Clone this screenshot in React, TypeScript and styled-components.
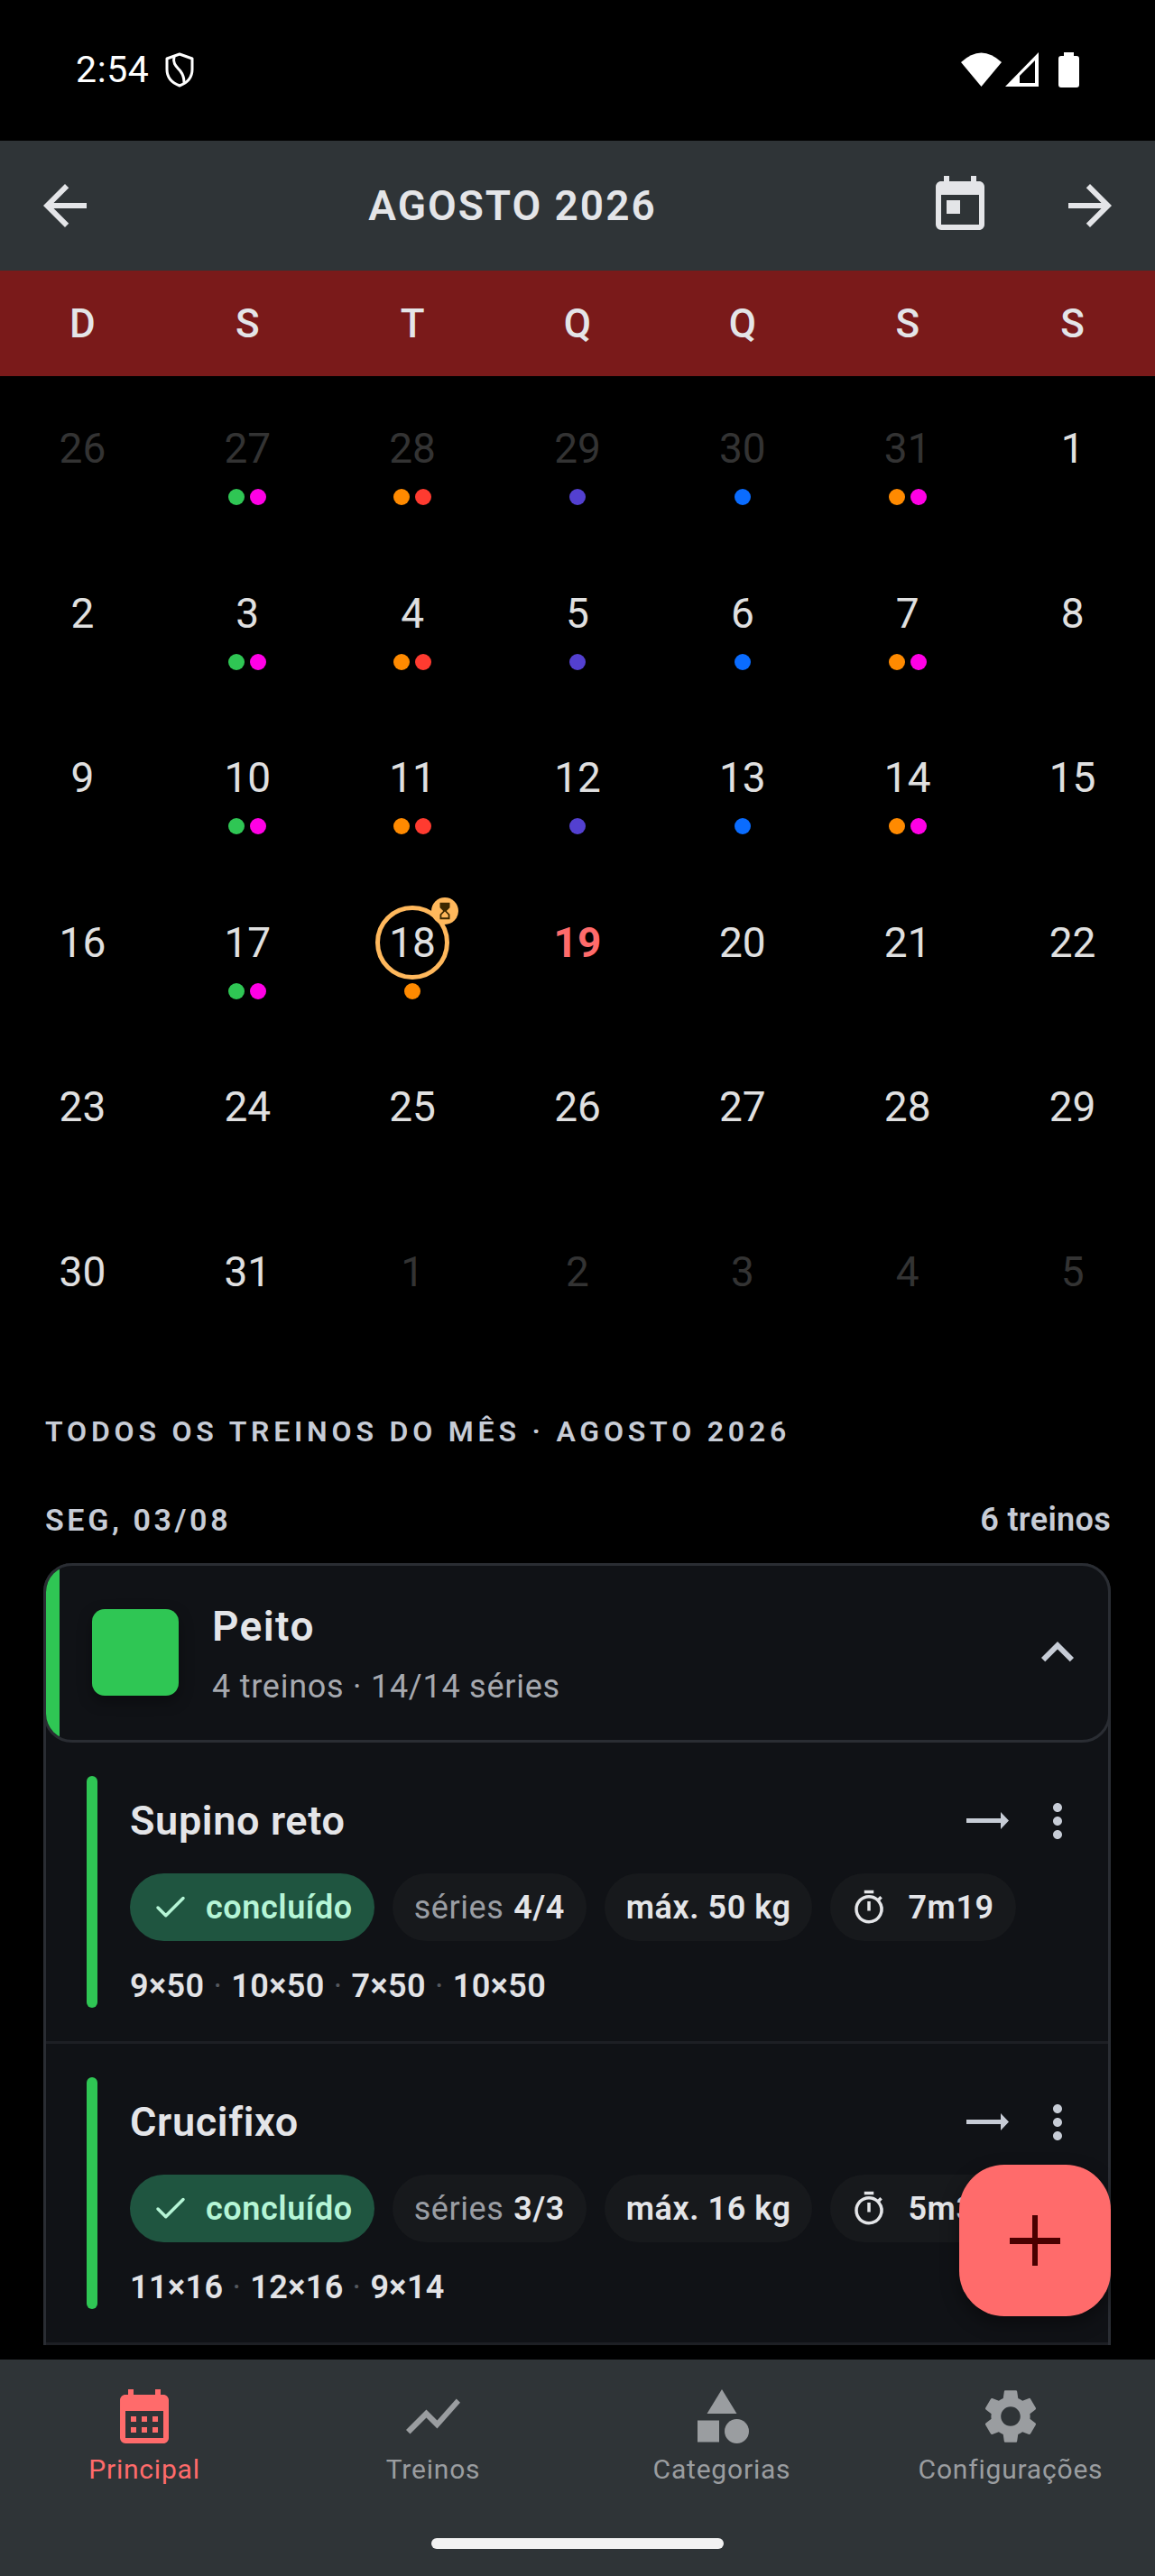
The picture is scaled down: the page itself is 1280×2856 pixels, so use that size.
import styled, { createGlobalStyle } from "styled-components";
import { Check } from "lucide-react";
import {
  MdArrowBack,
  MdArrowForward,
  MdCalendarMonth,
  MdCategory,
  MdExpandLess,
  MdHourglassTop,
  MdMoreVert,
  MdOutlineTimer,
  MdSettings,
  MdShowChart,
  MdToday,
} from "react-icons/md";

const GlobalStyle = createGlobalStyle`
  * { box-sizing: border-box; }
  html, body { margin: 0; padding: 0; background: #000; }
  body { font-family: Roboto, "Noto Sans", sans-serif; }
`;

const Page = styled.div`
  position: relative;
  width: 1280px;
  height: 2856px;
  display: flex;
  flex-direction: column;
  overflow: hidden;
  background: #000;
`;

const StatusBar = styled.div`
  height: 156px;
  flex: none;
  display: flex;
  justify-content: space-between;
  padding: 58px 84px 0;
  color: #fff;
`;

const StatusLeft = styled.div`
  display: flex;
  align-items: flex-start;
  gap: 18px;
`;

const StatusTime = styled.span`
  font-size: 41px;
  line-height: 39px;
  letter-spacing: 0.6px;
`;

const StatusRight = styled.div`
  display: flex;
  align-items: flex-start;
  gap: 4px;
`;

const Battery = styled.svg`
  margin-left: 18px;
`;

const Header = styled.header`
  height: 144px;
  flex: none;
  display: flex;
  align-items: center;
  padding: 0 36px;
  background: #2f3437;
  color: #e4e5e8;
`;

const HeaderTitle = styled.h1`
  flex: 1;
  margin: 0;
  text-align: center;
  font-size: 46px;
  font-weight: 600;
  letter-spacing: 2px;
`;

const HeaderIcons = styled.div`
  display: flex;
  align-items: center;
  gap: 72px;
`;

const Weekdays = styled.div`
  height: 117px;
  flex: none;
  display: grid;
  grid-template-columns: repeat(7, 1fr);
  align-items: center;
  background: #7a1a1a;
`;

const Weekday = styled.span`
  text-align: center;
  color: #e4e5e8;
  font-size: 44px;
  font-weight: 500;
`;

const Content = styled.main`
  flex: 1;
  min-height: 0;
  overflow: hidden;
`;

const Calendar = styled.div`
  display: grid;
  grid-template-columns: repeat(7, 1fr);
  grid-auto-rows: 182.6px;
`;

const DayCell = styled.div`
  display: flex;
  flex-direction: column;
  align-items: center;
  padding-top: 39px;
`;

const DayNumber = styled.div<{ $muted?: boolean; $today?: boolean; $ring?: boolean }>`
  position: relative;
  width: 82px;
  height: 82px;
  display: flex;
  align-items: center;
  justify-content: center;
  border-radius: 50%;
  border: 5px solid ${(p) => (p.$ring ? "#ffb85c" : "transparent")};
  font-size: 46px;
  font-weight: ${(p) => (p.$today ? 700 : 400)};
  color: ${(p) => (p.$today ? "#ff6b6b" : p.$muted ? "#333333" : "#e0e0e0")};
`;

const RingBadge = styled.span`
  position: absolute;
  top: -14px;
  right: -15px;
  width: 30px;
  height: 30px;
  display: flex;
  align-items: center;
  justify-content: center;
  border-radius: 50%;
  background: #ffb85c;
  color: #3d2800;
`;

const Dots = styled.div`
  display: flex;
  gap: 6px;
  margin-top: 4px;
`;

const Dot = styled.span<{ $color: string }>`
  width: 18px;
  height: 18px;
  border-radius: 50%;
  background: ${(p) => p.$color};
`;

const Section = styled.section`
  padding: 54px 49px 0 48px;
`;

const SectionTitle = styled.h2`
  margin: 0 0 0 2px;
  font-size: 32px;
  line-height: 40px;
  font-weight: 600;
  letter-spacing: 4.8px;
  color: #c7ccd6;
`;

const DayHeading = styled.div`
  display: flex;
  justify-content: space-between;
  margin: 58px 0 28px 2px;
  line-height: 40px;
  color: #c7ccd6;
`;

const DayLabel = styled.span`
  font-size: 34px;
  font-weight: 600;
  letter-spacing: 3.6px;
`;

const DayCount = styled.span`
  font-size: 36px;
  font-weight: 600;
  letter-spacing: 0.3px;
`;

const Group = styled.div`
  border: solid #2a2d33;
  border-width: 0 3px;
  background: #101216;
  border-radius: 32px 32px 0 0;
`;

const GroupHeader = styled.div`
  height: 199px;
  margin: 0 -3px;
  display: flex;
  align-items: center;
  border: 3px solid #2a2d33;
  border-radius: 32px;
  overflow: hidden;
  background: #101216;
`;

const GroupStripe = styled.span<{ $color: string }>`
  width: 15px;
  align-self: stretch;
  flex: none;
  background: ${(p) => p.$color};
`;

const GroupSwatch = styled.span<{ $color: string }>`
  width: 96px;
  height: 96px;
  flex: none;
  margin-left: 36px;
  border-radius: 14px;
  background: ${(p) => p.$color};
  box-shadow: 0 6px 16px rgba(0, 0, 0, 0.35);
`;

const GroupText = styled.div`
  flex: 1;
  margin-left: 37px;
  padding-top: 3px;
  display: flex;
  flex-direction: column;
  gap: 17px;
`;

const GroupName = styled.span`
  font-size: 46px;
  line-height: 56px;
  font-weight: 600;
  letter-spacing: 1.4px;
  color: #e4e5e8;
`;

const GroupMeta = styled.span`
  font-size: 36px;
  line-height: 44px;
  letter-spacing: 0.75px;
  color: #a6a9af;
`;

const GroupChevron = styled.span`
  display: flex;
  margin-right: 20px;
  color: #c7ccd6;
`;

const Exercise = styled.div`
  display: flex;
  gap: 36px;
  padding: 37px 26px 37px 45px;
  border-bottom: 3px solid #1d1f24;
`;

const ExerciseBar = styled.span<{ $color: string }>`
  width: 12px;
  flex: none;
  border-radius: 6px;
  background: ${(p) => p.$color};
`;

const ExerciseBody = styled.div`
  flex: 1;
  min-width: 0;
  height: 257px;
  padding-top: 22px;
  display: flex;
  flex-direction: column;
`;

const ExerciseTop = styled.div`
  height: 56px;
  display: flex;
  align-items: center;
  justify-content: space-between;
`;

const ExerciseName = styled.span`
  font-size: 45px;
  font-weight: 600;
  letter-spacing: 0.65px;
  color: #e4e5e8;
`;

const ExerciseActions = styled.div`
  display: flex;
  align-items: center;
  gap: 24px;
  color: #c7ccd6;
`;

const Pills = styled.div`
  display: flex;
  gap: 20px;
  margin-top: 30px;
  white-space: nowrap;
`;

const Pill = styled.span<{ $done?: boolean }>`
  height: 75px;
  flex: none;
  display: inline-flex;
  align-items: center;
  padding: 2px 24px 0;
  border-radius: 38px;
  font-size: 36px;
  font-weight: 600;
  letter-spacing: 0.55px;
  background: ${(p) => (p.$done ? "#1f5540" : "#17191c")};
  color: ${(p) => (p.$done ? "#b5f5d6" : "#e4e5e8")};
`;

const DonePill = styled(Pill)`
  padding-left: 24px;
  gap: 18px;
`;

const TimerPill = styled(Pill)`
  padding-left: 22px;
  gap: 22px;
`;

const PillDim = styled.span`
  font-weight: 400;
  color: #9a9da3;
  margin-right: 11px;
`;

const SetsLine = styled.div`
  margin-top: 30px;
  line-height: 40px;
  font-size: 36px;
  font-weight: 600;
  letter-spacing: 0.4px;
  color: #e2e3e6;
`;

const SetSep = styled.span`
  margin: 0 10px;
  font-weight: 400;
  color: #55585e;
`;

const Fab = styled.button`
  position: absolute;
  right: 49px;
  bottom: 288px;
  width: 168px;
  height: 168px;
  display: flex;
  align-items: center;
  justify-content: center;
  border: 0;
  border-radius: 50px;
  background: #ff6b6b;
  box-shadow: 0 8px 20px rgba(0, 0, 0, 0.4);
  color: #4a0000;
`;

const BottomNav = styled.nav`
  height: 240px;
  flex: none;
  display: flex;
  flex-direction: column;
  background: #2f3437;
`;

const NavRow = styled.div`
  display: grid;
  grid-template-columns: repeat(4, 1fr);
  padding-top: 27px;
`;

const NavItem = styled.div<{ $active?: boolean }>`
  display: flex;
  flex-direction: column;
  align-items: center;
  gap: 3px;
  color: ${(p) => (p.$active ? "#ff6b6b" : "#9a9da0")};
`;

const NavLabel = styled.span`
  font-size: 30px;
  line-height: 40px;
  letter-spacing: 0.8px;
`;

const HomeBar = styled.div`
  width: 324px;
  height: 12px;
  margin: auto auto 30px;
  border-radius: 6px;
  background: #f2f2f2;
`;

const GREEN = "#2fc654";
const MAGENTA = "#ff00e5";
const ORANGE = "#ff8a00";
const RED = "#ff3b30";
const INDIGO = "#5340d0";
const BLUE = "#0a6cff";

const weekdays = ["D", "S", "T", "Q", "Q", "S", "S"];

const dotsByColumn: string[][] = [
  [],
  [GREEN, MAGENTA],
  [ORANGE, RED],
  [INDIGO],
  [BLUE],
  [ORANGE, MAGENTA],
  [],
];

type Day = { n: number; muted?: boolean; dots?: string[]; today?: boolean; ring?: boolean };

function buildDays(): Day[] {
  const days: Day[] = [];
  for (let n = 26; n <= 31; n++) days.push({ n, muted: true });
  for (let n = 1; n <= 31; n++) days.push({ n });
  for (let n = 1; n <= 5; n++) days.push({ n, muted: true });
  days.forEach((d, i) => {
    if (i < 20) d.dots = dotsByColumn[i % 7];
  });
  days[22].dots = dotsByColumn[1];
  days[23].dots = [ORANGE];
  days[23].ring = true;
  days[24].today = true;
  return days;
}

const exercises = [
  {
    name: "Supino reto",
    series: "4/4",
    max: "máx. 50 kg",
    time: "7m19",
    sets: ["9×50", "10×50", "7×50", "10×50"],
  },
  {
    name: "Crucifixo",
    series: "3/3",
    max: "máx. 16 kg",
    time: "5m31",
    sets: ["11×16", "12×16", "9×14"],
  },
];

const navItems = [
  { label: "Principal", Icon: MdCalendarMonth, active: true },
  { label: "Treinos", Icon: MdShowChart },
  { label: "Categorias", Icon: MdCategory },
  { label: "Configurações", Icon: MdSettings },
];

function ShieldIcon() {
  return (
    <svg width="32" height="39" viewBox="0 0 32 39" fill="none" stroke="#fff" strokeWidth="3">
      <path d="M16 2 L30 7 V19 C30 28 24 34 16 37 C8 34 2 28 2 19 V7 Z" strokeLinejoin="round" />
      <path d="M10 5 C8 13 13 16 17 21 C20 25 21 30 21 33" strokeLinecap="round" />
    </svg>
  );
}

function LongArrow() {
  return (
    <svg width="47" height="19" viewBox="0 0 47 19" fill="currentColor">
      <path d="M0 7H38V0L47 9.5 38 19V12H0Z" />
    </svg>
  );
}

function PlusIcon() {
  return (
    <svg width="56" height="56" viewBox="0 0 56 56" fill="currentColor">
      <path d="M25 0H31V25H56V32H31V56H25V32H0V25H25Z" />
    </svg>
  );
}

export default function App() {
  const days = buildDays();
  return (
    <Page>
      <GlobalStyle />
      <StatusBar>
        <StatusLeft>
          <StatusTime>2:54</StatusTime>
          <ShieldIcon />
        </StatusLeft>
        <StatusRight>
          <svg width="45" height="38" viewBox="0 0 45 38" fill="#fff">
            <path d="M0 11 Q22.5 -10 45 11 L22.5 38 Z" />
          </svg>
          <svg width="37" height="38" viewBox="0 0 37 38" fill="#fff" fillRule="evenodd">
            <path d="M37 0V38H0Z M33 9 L16 26 V34 H33Z" />
          </svg>
          <Battery width="23" height="39" viewBox="0 0 23 39" fill="#fff">
            <path d="M6 0H17V4H20Q23 4 23 7V36Q23 39 20 39H3Q0 39 0 36V7Q0 4 3 4H6Z" />
          </Battery>
        </StatusRight>
      </StatusBar>

      <Header>
        <MdArrowBack size={72} />
        <HeaderTitle>AGOSTO 2026</HeaderTitle>
        <HeaderIcons>
          <MdToday size={72} />
          <MdArrowForward size={72} />
        </HeaderIcons>
      </Header>

      <Weekdays>
        {weekdays.map((d, i) => (
          <Weekday key={i}>{d}</Weekday>
        ))}
      </Weekdays>

      <Content>
        <Calendar>
          {days.map((d, i) => (
            <DayCell key={i}>
              <DayNumber $muted={d.muted} $today={d.today} $ring={d.ring}>
                {d.n}
                {d.ring && (
                  <RingBadge>
                    <MdHourglassTop size={22} />
                  </RingBadge>
                )}
              </DayNumber>
              {d.dots && d.dots.length > 0 && (
                <Dots>
                  {d.dots.map((c, j) => (
                    <Dot key={j} $color={c} />
                  ))}
                </Dots>
              )}
            </DayCell>
          ))}
        </Calendar>

        <Section>
          <SectionTitle>TODOS OS TREINOS DO MÊS · AGOSTO 2026</SectionTitle>
          <DayHeading>
            <DayLabel>SEG, 03/08</DayLabel>
            <DayCount>6 treinos</DayCount>
          </DayHeading>
          <Group>
            <GroupHeader>
              <GroupStripe $color={GREEN} />
              <GroupSwatch $color={GREEN} />
              <GroupText>
                <GroupName>Peito</GroupName>
                <GroupMeta>4 treinos · 14/14 séries</GroupMeta>
              </GroupText>
              <GroupChevron>
                <MdExpandLess size={72} />
              </GroupChevron>
            </GroupHeader>
            {exercises.map((ex) => (
              <Exercise key={ex.name}>
                <ExerciseBar $color={GREEN} />
                <ExerciseBody>
                  <ExerciseTop>
                    <ExerciseName>{ex.name}</ExerciseName>
                    <ExerciseActions>
                      <LongArrow />
                      <MdMoreVert size={60} />
                    </ExerciseActions>
                  </ExerciseTop>
                  <Pills>
                    <DonePill $done>
                      <Check size={42} strokeWidth={2} />
                      concluído
                    </DonePill>
                    <Pill>
                      <PillDim>séries</PillDim>
                      {ex.series}
                    </Pill>
                    <Pill>{ex.max}</Pill>
                    <TimerPill>
                      <MdOutlineTimer size={42} />
                      {ex.time}
                    </TimerPill>
                  </Pills>
                  <SetsLine>
                    {ex.sets.map((s, i) => (
                      <span key={i}>
                        {i > 0 && <SetSep>·</SetSep>}
                        {s}
                      </span>
                    ))}
                  </SetsLine>
                </ExerciseBody>
              </Exercise>
            ))}
          </Group>
        </Section>
      </Content>

      <BottomNav>
        <NavRow>
          {navItems.map(({ label, Icon, active }) => (
            <NavItem key={label} $active={active}>
              <Icon size={72} />
              <NavLabel>{label}</NavLabel>
            </NavItem>
          ))}
        </NavRow>
        <HomeBar />
      </BottomNav>

      <Fab aria-label="Adicionar">
        <PlusIcon />
      </Fab>
    </Page>
  );
}
